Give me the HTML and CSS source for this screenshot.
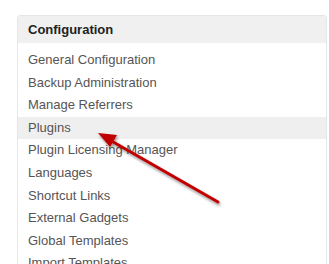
FILE: index.html
```html
<!DOCTYPE html>
<html lang="en">
  <head>
    <meta charset="UTF-8" />
    <title>Configuration</title>
    <link rel="stylesheet" href="styles.css">
  </head>
  <body>
    <div class="panel">
      <div class="panel-title">Configuration</div>
      <ul class="menu">
        <li>General Configuration</li>
        <li>Backup Administration</li>
        <li>Manage Referrers</li>
        <li class="active">Plugins</li>
        <li>Plugin Licensing Manager</li>
        <li>Languages</li>
        <li>Shortcut Links</li>
        <li>External Gadgets</li>
        <li>Global Templates</li>
        <li>Import Templates</li>
      </ul>
    </div>
    <svg class="arrow" width="329" height="264" viewBox="0 0 329 264">
      <defs>
        <filter id="shadow" x="-20%" y="-20%" width="140%" height="140%">
          <feGaussianBlur in="SourceAlpha" stdDeviation="1.5" />
          <feOffset dx="1" dy="2" result="blur" />
          <feComponentTransfer><feFuncA type="linear" slope="0.45" /></feComponentTransfer>
          <feMerge><feMergeNode /><feMergeNode in="SourceGraphic" /></feMerge>
        </filter>
      </defs>
      <g filter="url(#shadow)">
        <line x1="218" y1="202" x2="108" y2="139" stroke="#c00000" stroke-width="3" stroke-linecap="round" />
        <polygon points="98,133 117,135 110,147" fill="#c00000" />
      </g>
    </svg>
  </body>
</html>
```

FILE: styles.css
```css
body {
  margin: 0;
  padding: 15px 0 0 17px;
  background: #fff;
  font-family: "Liberation Sans", Arial, sans-serif;
  height: 264px;
  overflow: hidden;
  box-sizing: border-box;
}

.panel {
  width: 310px;
  border: 1px solid #e6e6e6;
  border-radius: 3px 3px 0 0;
  box-sizing: border-box;
}

.panel-title {
  height: 27px;
  line-height: 27px;
  padding-left: 10px;
  background-color: #f0f0f0;
  color: #222;
  font-size: 13px;
  font-weight: bold;
}

.menu {
  list-style: none;
  margin: 0;
  padding: 6px 0 0;
}

.menu li {
  height: 22.6px;
  line-height: 22.6px;
  padding-left: 10px;
  color: #555;
  font-size: 13px;
}

.menu li.active {
  background-color: #efefef;
}

.arrow {
  position: absolute;
  left: 0;
  top: 0;
}
```
